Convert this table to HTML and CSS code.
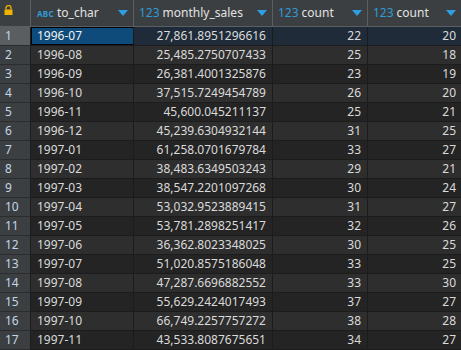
FILE: index.html
```html
<!doctype html>
<html>
  <head>
    <title>Result grid</title>
    <link rel="stylesheet" href="styles.css">
  </head>
  <body>
    <div class="grid">
      <div class="row head">
        <div class="cell num corner">
          <svg class="lock" width="9" height="10" viewBox="0 0 9 10">
            <path d="M2 4.5V3a2.5 2.5 0 0 1 5 0v1.5" fill="none" stroke="#e0a800" stroke-width="1.4"/>
            <rect x="0.5" y="4.5" width="8" height="5.5" fill="#f0b400"/>
          </svg>
        </div>
        <div class="cell c1"><span class="type abc">ABC</span><span class="name">to_char</span><span class="sort"></span></div>
        <div class="cell c2"><span class="type">123</span><span class="name">monthly_sales</span><span class="sort"></span></div>
        <div class="cell c3"><span class="type">123</span><span class="name">count</span><span class="sort"></span></div>
        <div class="cell c4"><span class="type">123</span><span class="name">count</span><span class="sort"></span></div>
      </div>
    </div>

    <script>
    var data = [
      ["1996-07","27,861.8951296616",22,20],
      ["1996-08","25,485.2750707433",25,18],
      ["1996-09","26,381.4001325876",23,19],
      ["1996-10","37,515.7249454789",26,20],
      ["1996-11","45,600.045211137",25,21],
      ["1996-12","45,239.6304932144",31,25],
      ["1997-01","61,258.0701679784",33,27],
      ["1997-02","38,483.6349503243",29,21],
      ["1997-03","38,547.2201097268",30,24],
      ["1997-04","53,032.9523889415",31,27],
      ["1997-05","53,781.2898251417",32,26],
      ["1997-06","36,362.8023348025",30,25],
      ["1997-07","51,020.8575186048",33,25],
      ["1997-08","47,287.6696882552",33,30],
      ["1997-09","55,629.2424017493",37,27],
      ["1997-10","66,749.2257757272",38,28],
      ["1997-11","43,533.8087675651",34,27]
    ];
    var grid = document.querySelector(".grid");
    for (var i = 0; i < data.length; i++) {
      var r = data[i];
      var row = document.createElement("div");
      row.className = "row body" + (i % 2 ? " even" : "") + (i == 0 ? " selected" : "");
      row.innerHTML =
        '<div class="cell num">' + (i + 1) + '</div>' +
        '<div class="cell c1 str"><span>' + r[0] + '</span></div>' +
        '<div class="cell c2 n">' + r[1] + '</div>' +
        '<div class="cell c3 n">' + r[2] + '</div>' +
        '<div class="cell c4 n">' + r[3] + '</div>';
      grid.appendChild(row);
    }
    </script>
  </body>
</html>
```

FILE: styles.css
```css
html, body {
  margin: 0;
  padding: 0;
  background: #2b2b2b;
  font-family: "Noto Sans", "Open Sans", sans-serif;
  font-size: 12px;
}

.grid {
  width: 461px;
  height: 350px;
  overflow: hidden;
}

.row {
  display: grid;
  grid-template-columns: 31px 103px 139px 95px 93px;
}

.cell {
  box-sizing: border-box;
  border-right: 1px solid #1c1c1c;
  border-bottom: 1px solid #1c1c1c;
  white-space: nowrap;
  overflow: hidden;
}

/* header */
.head .cell {
  height: 27px;
  background: #3c3f41;
  border-right-color: #5c5f61;
  border-bottom-color: #5c5f61;
  color: #e2e2e2;
  display: flex;
  align-items: center;
  padding: 0 5px 1px 5px;
}
.head .c1 { padding-left: 6px; }
.head .c4 { border-right: none; }

.type {
  color: #2e9ad6;
  margin-right: 3px;
}
.type.abc {
  font-size: 8px;
  font-weight: bold;
  letter-spacing: 0.3px;
  width: 17px;
  margin-right: 3px;
  margin-top: 1px;
}
.name {
  flex: 1;
}
.sort {
  width: 0;
  height: 0;
  border-left: 5px solid transparent;
  border-right: 5px solid transparent;
  border-top: 6px solid #2d9fe2;
}

.corner {
  align-items: flex-start !important;
  padding: 5px 0 0 4px !important;
}

/* body */
.body .cell {
  height: 19px;
  line-height: 18px;
  background: #242424;
  color: #dadada;
  padding: 0 6px;
}
.body.even .cell {
  background: #2e2e2e;
}
.body .num,
.body.even .num {
  background: #3c3f41;
  color: #c4d6e6;
  padding-left: 5px;
  border-bottom-color: #2a2c2e;
}
.body .c4 {
  border-right: none;
  padding-right: 5px;
}
.n {
  text-align: right;
}
.str {
  color: #ddd0bd;
}

/* selected row */
.selected .cell {
  background: #1f2b38;
}
.selected .num {
  background: #5b5e61;
}
.selected .c1 {
  padding: 0;
}
.selected .c1 span {
  display: block;
  height: 18px;
  margin-top: 0;
  padding-left: 5px;
  background: #0e4a7a;
  border: 1px solid #000;
  line-height: 16px;
  color: #f0f0f0;
  box-sizing: border-box;
  margin-right: -1px;
}
```
